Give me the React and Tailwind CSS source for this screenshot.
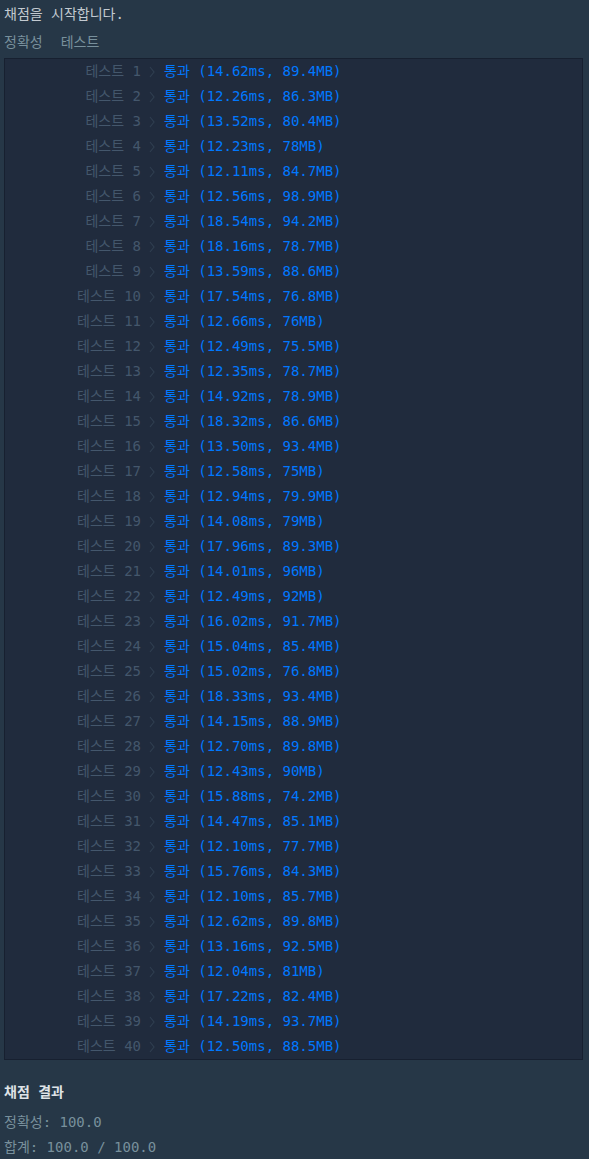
import React from 'react';

const results = [
    ['14.62ms', '89.4MB'], ['12.26ms', '86.3MB'], ['13.52ms', '80.4MB'], ['12.23ms', '78MB'],
    ['12.11ms', '84.7MB'], ['12.56ms', '98.9MB'], ['18.54ms', '94.2MB'], ['18.16ms', '78.7MB'],
    ['13.59ms', '88.6MB'], ['17.54ms', '76.8MB'], ['12.66ms', '76MB'], ['12.49ms', '75.5MB'],
    ['12.35ms', '78.7MB'], ['14.92ms', '78.9MB'], ['18.32ms', '86.6MB'], ['13.50ms', '93.4MB'],
    ['12.58ms', '75MB'], ['12.94ms', '79.9MB'], ['14.08ms', '79MB'], ['17.96ms', '89.3MB'],
    ['14.01ms', '96MB'], ['12.49ms', '92MB'], ['16.02ms', '91.7MB'], ['15.04ms', '85.4MB'],
    ['15.02ms', '76.8MB'], ['18.33ms', '93.4MB'], ['14.15ms', '88.9MB'], ['12.70ms', '89.8MB'],
    ['12.43ms', '90MB'], ['15.88ms', '74.2MB'], ['14.47ms', '85.1MB'], ['12.10ms', '77.7MB'],
    ['15.76ms', '84.3MB'], ['12.10ms', '85.7MB'], ['12.62ms', '89.8MB'], ['13.16ms', '92.5MB'],
    ['12.04ms', '81MB'], ['17.22ms', '82.4MB'], ['14.19ms', '93.7MB'], ['12.50ms', '88.5MB'],
];

const mono = "font-['DejaVu_Sans_Mono','Noto_Sans_CJK_KR',monospace]";

const App = () => {
    return (
        <div className={`min-h-screen w-[589px] bg-[#263747] pl-1 pr-[6px] pt-[4px] text-[14px] ${mono}`}>
            <div className="h-[20px] leading-[20px] text-[#c3cad1]">채점을 시작합니다.</div>
            <div className="mt-[8px] flex h-[20px] gap-[18px] leading-[20px] text-[#78909c]">
                <span>정확성</span>
                <span>테스트</span>
            </div>
            <div className="mt-[6px] border border-[#172030] bg-[#202b3d]">
                {results.map(([time, mem], i) => (
                    <div key={i} className="flex h-[25px] items-center">
                        <span className="w-[136px] text-right text-[#44576c]">
                            테스트 {i + 1}
                        </span>
                        <svg className="ml-[7px] mr-[8px] h-[12px] w-[8px]" viewBox="0 0 8 12" fill="none">
                            <path d="M2 1 L6 6 L2 11" stroke="#2f3e50" strokeWidth="1.2" />
                        </svg>
                        <span className="text-[#0078ff]">
                            통과 ({time}, {mem})
                        </span>
                    </div>
                ))}
            </div>
            <div className="mt-[22px] h-[20px] leading-[20px] font-semibold text-[#dee2e6]">채점 결과</div>
            <div className="mt-[10px] h-[20px] leading-[20px] text-[#78909c]">정확성: 100.0</div>
            <div className="mt-[5px] h-[20px] leading-[20px] text-[#78909c]">합계: 100.0 / 100.0</div>
        </div>
    );
};

export default App;
